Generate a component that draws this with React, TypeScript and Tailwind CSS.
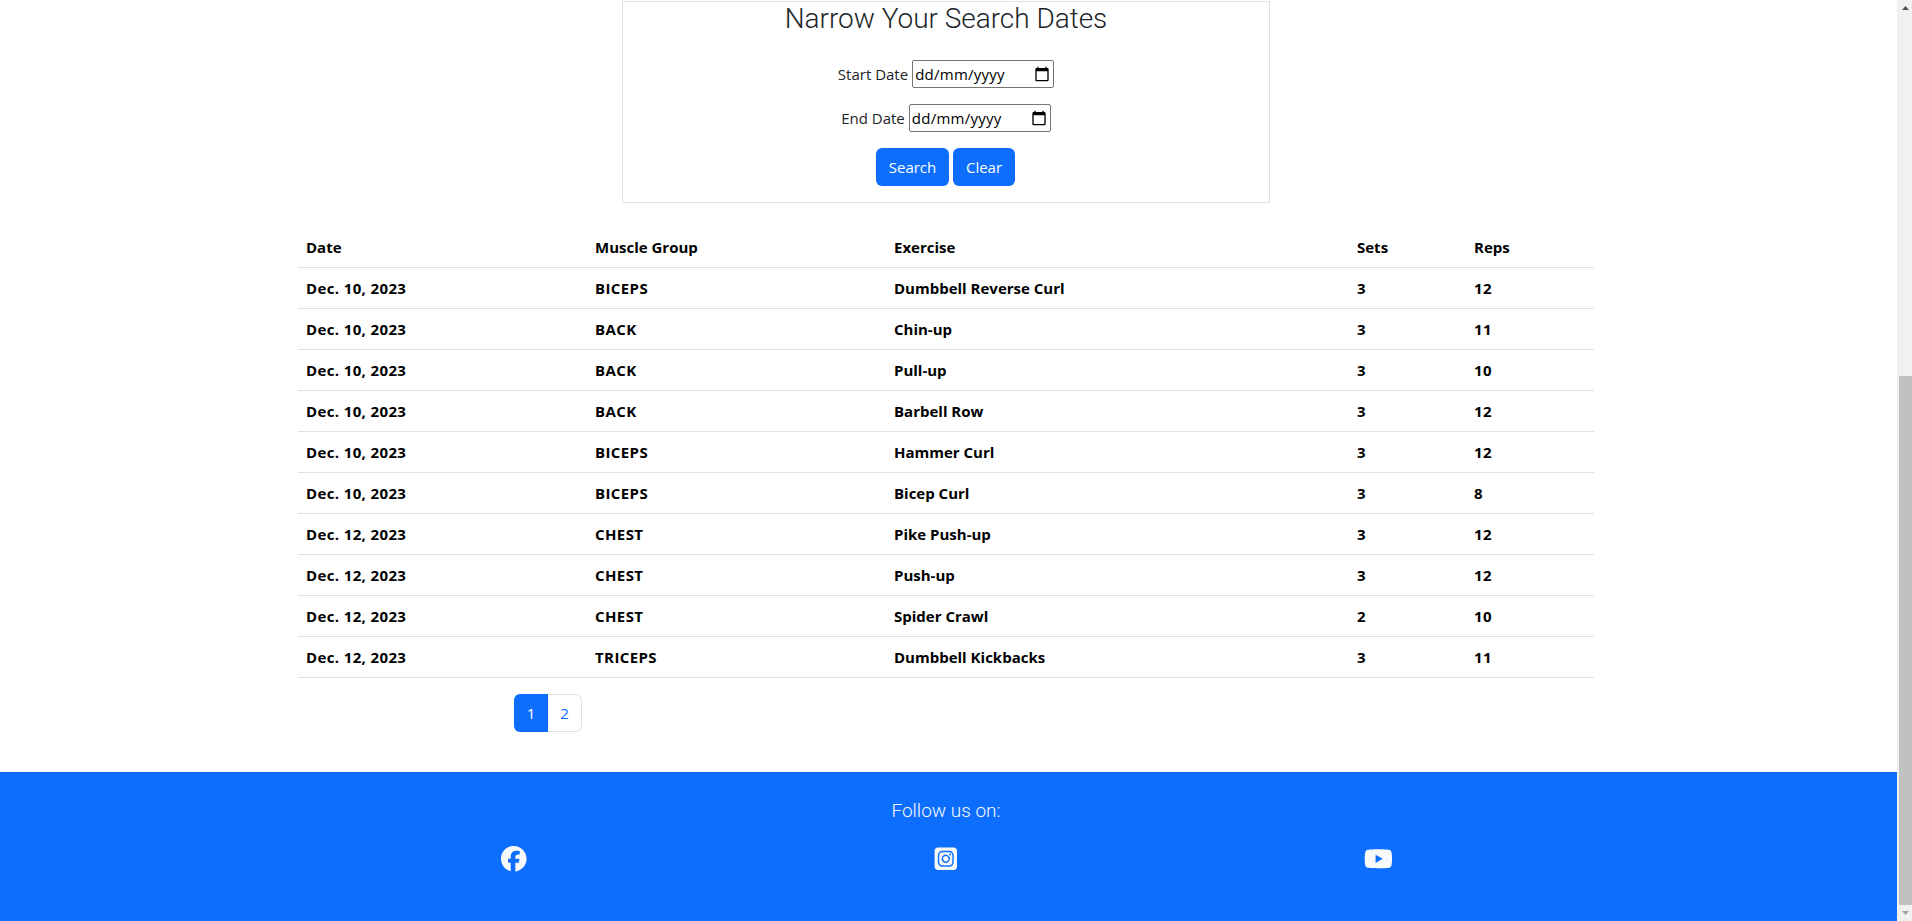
import { FaFacebook, FaSquareInstagram, FaYoutube } from "react-icons/fa6";

const rows: [string, string, string, string, string][] = [
  ["Dec. 10, 2023", "BICEPS", "Dumbbell Reverse Curl", "3", "12"],
  ["Dec. 10, 2023", "BACK", "Chin-up", "3", "11"],
  ["Dec. 10, 2023", "BACK", "Pull-up", "3", "10"],
  ["Dec. 10, 2023", "BACK", "Barbell Row", "3", "12"],
  ["Dec. 10, 2023", "BICEPS", "Hammer Curl", "3", "12"],
  ["Dec. 10, 2023", "BICEPS", "Bicep Curl", "3", "8"],
  ["Dec. 12, 2023", "CHEST", "Pike Push-up", "3", "12"],
  ["Dec. 12, 2023", "CHEST", "Push-up", "3", "12"],
  ["Dec. 12, 2023", "CHEST", "Spider Crawl", "2", "10"],
  ["Dec. 12, 2023", "TRICEPS", "Dumbbell Kickbacks", "3", "11"],
];

const columnTracking = ["tracking-[0.37px]", "tracking-[0.4px]", "", "", "tracking-[0.3px]"];

function CalendarIcon() {
  return (
    <svg viewBox="0 0 24 24" className="size-4 shrink-0" fill="#000">
      <path d="M20 3h-1V1h-2v2H7V1H5v2H4c-1.1 0-2 .9-2 2v16c0 1.1.9 2 2 2h16c1.1 0 2-.9 2-2V5c0-1.1-.9-2-2-2zm0 18H4V8h16v13z" />
    </svg>
  );
}

function DateField({ label }: { label: string }) {
  return (
    <div className="flex h-7 items-center justify-center">
      <span className="mr-1 text-[15px] text-[#212529]">{label}</span>
      <div className="flex h-7 w-[142px] items-center justify-between rounded-xs border border-[#767676] bg-white pr-[3px] pl-0.5 text-[15px] tracking-[0.25px] text-black">
        <span>dd/mm/yyyy</span>
        <CalendarIcon />
      </div>
    </div>
  );
}

function Scrollbar() {
  return (
    <div className="flex w-[15px] shrink-0 flex-col items-end bg-[#f1f1f1]">
      <svg className="h-[376px] w-[15px]" viewBox="0 0 15 376" fill="#505050">
        <path d="M5 10h7l-3.5-4z" />
      </svg>
      <div className="h-[529px] w-[13px] bg-[#c1c1c1]" />
      <svg className="h-4 w-[15px]" viewBox="0 0 15 16" fill="#a3a3a3">
        <path d="M5 6h7l-3.5 4z" />
      </svg>
    </div>
  );
}

export default function App() {
  return (
    <div className="flex h-[921px] w-full overflow-hidden bg-white font-['Open_Sans','Noto_Sans',sans-serif]">
      <div className="flex min-w-0 flex-1 flex-col">
        <main className="ml-[298px] w-[1296px] pt-px">
          <section className="mx-auto flex h-[202px] w-[648px] flex-col items-center border border-[#dee2e6]">
            <h2 className="h-[34px] font-['Roboto',sans-serif] text-[28px] leading-[34px] font-light tracking-[-0.03px] text-[#212529]">
              Narrow Your Search Dates
            </h2>
            <div className="mt-6 flex flex-col gap-4">
              <DateField label="Start Date" />
              <DateField label="End Date" />
            </div>
            <div className="mt-4 mr-px flex gap-1 text-[15px] text-white">
              <button className="h-[38px] w-[73px] rounded-md bg-[#0d6efd]">Search</button>
              <button className="h-[38px] w-[62px] rounded-md bg-[#0d6efd]">Clear</button>
            </div>
          </section>

          <table className="mt-6 w-full table-fixed border-separate border-spacing-0 text-left text-[15px] leading-6 font-bold text-black">
            <colgroup>
              <col className="w-[289px]" />
              <col className="w-[299px]" />
              <col className="w-[463px]" />
              <col className="w-[117px]" />
              <col className="w-[128px]" />
            </colgroup>
            <thead>
              <tr>
                {["Date", "Muscle Group", "Exercise", "Sets", "Reps"].map((h) => (
                  <th key={h} className="h-[41px] border-b border-[#dee2e6] px-2 py-0">{h}</th>
                ))}
              </tr>
            </thead>
            <tbody>
              {rows.map((row, i) => (
                <tr key={i}>
                  {row.map((cell, j) => (
                    <td key={j} className={`h-[41px] border-b border-[#dee2e6] px-2 py-0 ${columnTracking[j]}`}>{cell}</td>
                  ))}
                </tr>
              ))}
            </tbody>
          </table>

          <nav className="mt-4 ml-[216px] flex h-[38px] text-[15px]">
            <span className="flex w-[34px] items-center justify-center rounded-l-md bg-[#0d6efd] text-white">1</span>
            <span className="flex w-[34px] items-center justify-center rounded-r-md border border-l-0 border-[#dee2e6] text-[#0d6efd]">2</span>
          </nav>
        </main>

        <footer className="mt-10 flex-1 bg-[#0d6efd] pt-[27px] text-[#f8f9fa]">
          <div className="ml-[298px] w-[1296px] text-center">
            <p className="font-['Roboto',sans-serif] text-[19px] leading-6 font-light">Follow us on:</p>
          </div>
          <div className="mt-[23px] ml-[298px] grid w-[1296px] grid-cols-3 justify-items-center text-[25.6px]">
            <FaFacebook />
            <FaSquareInstagram />
            <FaYoutube className="w-[28.8px]" />
          </div>
        </footer>
      </div>
      <Scrollbar />
    </div>
  );
}
